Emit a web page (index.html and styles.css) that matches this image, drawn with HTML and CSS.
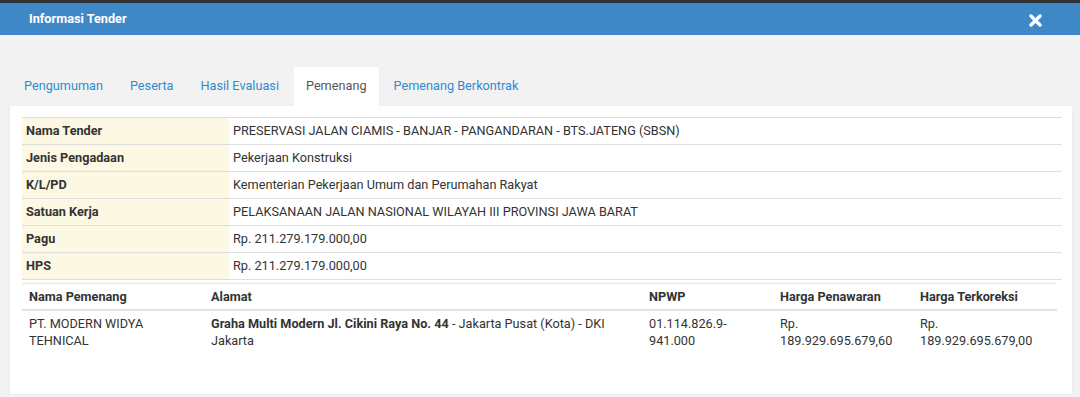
FILE: index.html
```html
<!doctype html>
<html lang="id">
<head>
    <meta charset="utf-8"/>
    <title>Informasi Tender</title>
    <link rel="stylesheet" href="styles.css">
</head>
<body>

<div class="topline"></div>

<!--judul modal-->
<div class="modal-header">
    <span class="modal-title">Informasi Tender</span>
    <span class="close">
        <svg width="13" height="13" viewBox="0 0 13 13">
            <path d="M2 2 L11 11 M11 2 L2 11" stroke="#fff" stroke-width="3.4" stroke-linecap="round"/>
        </svg>
    </span>
</div>

<div class="modal-body">
    <ul class="tabs">
        <li><a>Pengumuman</a></li>
        <li><a>Peserta</a></li>
        <li><a>Hasil Evaluasi</a></li>
        <li class="active"><a>Pemenang</a></li>
        <li><a>Pemenang Berkontrak</a></li>
    </ul>

    <div class="panel">
        <table class="info">
            <tr><th>Nama Tender</th><td>PRESERVASI JALAN CIAMIS - BANJAR - PANGANDARAN - BTS.JATENG (SBSN)</td></tr>
            <tr><th>Jenis Pengadaan</th><td>Pekerjaan Konstruksi</td></tr>
            <tr><th>K/L/PD</th><td>Kementerian Pekerjaan Umum dan Perumahan Rakyat</td></tr>
            <tr><th>Satuan Kerja</th><td>PELAKSANAAN JALAN NASIONAL WILAYAH III PROVINSI JAWA BARAT</td></tr>
            <tr><th>Pagu</th><td>Rp. 211.279.179.000,00</td></tr>
            <tr><th>HPS</th><td>Rp. 211.279.179.000,00</td></tr>
        </table>

        <table class="winner">
            <thead>
            <tr>
                <th class="c-name">Nama Pemenang</th>
                <th class="c-addr">Alamat</th>
                <th class="c-npwp">NPWP</th>
                <th class="c-offer">Harga Penawaran</th>
                <th>Harga Terkoreksi</th>
            </tr>
            </thead>
            <tbody>
            <tr>
                <td>PT. MODERN WIDYA TEHNICAL</td>
                <td><b>Graha Multi Modern Jl. Cikini Raya No. 44</b> - Jakarta Pusat (Kota) - DKI Jakarta</td>
                <td>01.114.826.9-941.000</td>
                <td>Rp. 189.929.695.679,60</td>
                <td>Rp. 189.929.695.679,00</td>
            </tr>
            </tbody>
        </table>
    </div>
</div>

</body>
</html>
```

FILE: styles.css
```css
* {
    padding: 0;
    margin: 0;
    list-style: none;
    box-sizing: border-box;
}
body {
    background: #f2f2f2;
    font-family: Roboto, "Liberation Sans", Arial, sans-serif;
    font-size: 12.7px;
    color: #333;
    width: 1080px;
    height: 397px;
    overflow: hidden;
}
.topline {
    height: 3px;
    background: #2f3133;
}
.modal-header {
    height: 32px;
    background: #3f88c8;
    padding: 0 38px 0 29px;
    display: flex;
    align-items: center;
    justify-content: space-between;
}
.modal-title {
    color: #fff;
    font-weight: bold;
    margin-top: -1px;
}
.close {
    display: flex;
    margin-top: 2px;
}
.modal-body {
    padding: 32px 8px 3px 10px;
}
.tabs {
    display: flex;
    padding-left: 2px;
}
.tabs li {
    margin-right: 3px;
}
.tabs a {
    display: block;
    height: 39px;
    line-height: 38px;
    padding: 0 12px;
    color: #2f8bd0;
}
.tabs li.active a {
    background: #fff;
    color: #555;
}
.panel {
    background: #fff;
    padding: 11px 10px 0 12px;
    height: 288px;
    box-shadow: 0 0 2px rgba(0, 0, 0, 0.06);
}
table {
    border-collapse: collapse;
    width: 100%;
}
.info th,
.info td {
    border-top: 1px solid #dedede;
    border-bottom: 1px solid #dedede;
    padding: 4px 4px 5px 4px;
    line-height: 17px;
    text-align: left;
    vertical-align: top;
}
.info th {
    width: 207px;
    background: #fcf8e3;
    font-weight: bold;
}
.winner {
    width: 1035px;
    margin-top: 3px;
}
.winner th,
.winner td {
    padding: 4px 8px 4px 7px;
    line-height: 17px;
    text-align: left;
    vertical-align: top;
}
.winner th {
    border-top: 1px solid #e6e6e6;
    border-bottom: 2px solid #e2e2e2;
    font-weight: bold;
}
.c-name {
    width: 182px;
}
.c-addr {
    width: 438px;
}
.c-npwp {
    width: 131px;
}
.c-offer {
    width: 140px;
}
```
